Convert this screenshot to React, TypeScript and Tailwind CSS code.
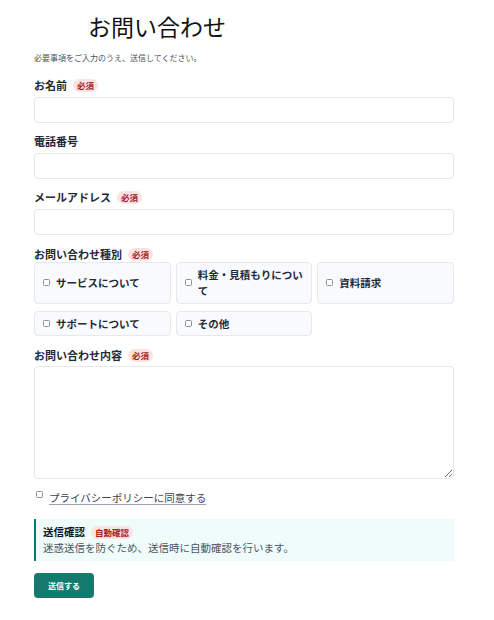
import { type ReactNode } from "react";

const CATEGORIES = ["サービスについて", "料金・見積もりについて", "資料請求", "サポートについて", "その他"];

function Badge({ children }: { children: ReactNode }) {
  return (
    <span className="inline-flex h-[13px] items-center rounded-full bg-[#fde2e2] px-[4px] text-[8.5px] font-bold leading-none text-[#a32020]">
      {children}
    </span>
  );
}

function FieldLabel({ text, required }: { text: string; required?: boolean }) {
  return (
    <div className="flex h-[16px] items-center gap-[6px]">
      <span className="text-[11px] font-bold leading-none text-[#1f2937]">{text}</span>
      {required && <Badge>必須</Badge>}
    </div>
  );
}

function Box() {
  return <span className="inline-block h-[7px] w-[7px] shrink-0 rounded-[1.5px] border border-[#8b8f96] bg-white" />;
}

const inputCls = "block h-[26px] w-full rounded-[4px] border border-[#e5e7eb] bg-white";

export default function App() {
  return (
    <div className="min-h-[620px] w-[494px] bg-white font-['Noto_Sans_CJK_JP','Noto_Sans',sans-serif] text-[#1f2937]">
      <form className="ml-[34px] flex w-[420px] flex-col pt-[11px]">
        <h1 className="pl-[54px] text-[23px] font-normal leading-[30px] text-[#111]">お問い合わせ</h1>
        <p className="mt-[11px] text-[8px] leading-[12px] text-[#4b5563]">
          必要事項をご入力のうえ、送信してください。
        </p>

        <div className="mt-[13px]">
          <FieldLabel text="お名前" required />
          <input className={`mt-[4px] ${inputCls}`} />
        </div>

        <div className="mt-[10px]">
          <FieldLabel text="電話番号" />
          <input className={`mt-[4px] ${inputCls}`} />
        </div>

        <div className="mt-[10px]">
          <FieldLabel text="メールアドレス" required />
          <input className={`mt-[4px] ${inputCls}`} />
        </div>

        <div className="mt-[11px]">
          <FieldLabel text="お問い合わせ種別" required />
          <div className="grid grid-cols-3 gap-x-[5px] gap-y-[7px]">
            {CATEGORIES.map((c) => (
              <label
                key={c}
                className="flex items-center gap-[6px] rounded-[4px] border border-[#e5e8ee] bg-[#f8fafc] px-[8px] py-[4px]"
              >
                <Box />
                <span className="text-[10.5px] font-bold leading-[1.5] text-[#1f2937]">{c}</span>
              </label>
            ))}
          </div>
        </div>

        <div className="mt-[11px]">
          <FieldLabel text="お問い合わせ内容" required />
          <textarea className="mt-[3px] block h-[113px] w-full rounded-[4px] border border-[#e5e7eb] bg-white" />
        </div>

        <label className="mt-[11px] flex items-start gap-[6px] pl-[2px]">
          <span className="mt-[1px] inline-block h-[7px] w-[7px] shrink-0 rounded-[1.5px] border border-[#8b8f96] bg-white" />
          <span className="text-[10.5px] leading-[16px] text-[#374151] underline decoration-[#9ca3af] underline-offset-2">
            プライバシーポリシーに同意する
          </span>
        </label>

        <div className="mt-[13px] border-l-2 border-[#0f766e] bg-[#effcfa] py-[5px] pl-[7px]">
          <div className="flex h-[16px] items-center gap-[6px]">
            <span className="text-[10.5px] font-bold leading-none text-[#111827]">送信確認</span>
            <Badge>自動確認</Badge>
          </div>
          <p className="text-[10.5px] leading-[16px] text-[#4b5563]">
            迷惑送信を防ぐため、送信時に自動確認を行います。
          </p>
        </div>

        <div className="mt-[12px]">
          <button
            type="button"
            className="block h-[25px] w-[60px] rounded-[4px] bg-[#157a6e] text-[8px] font-bold text-white"
          >
            送信する
          </button>
        </div>
      </form>
    </div>
  );
}
